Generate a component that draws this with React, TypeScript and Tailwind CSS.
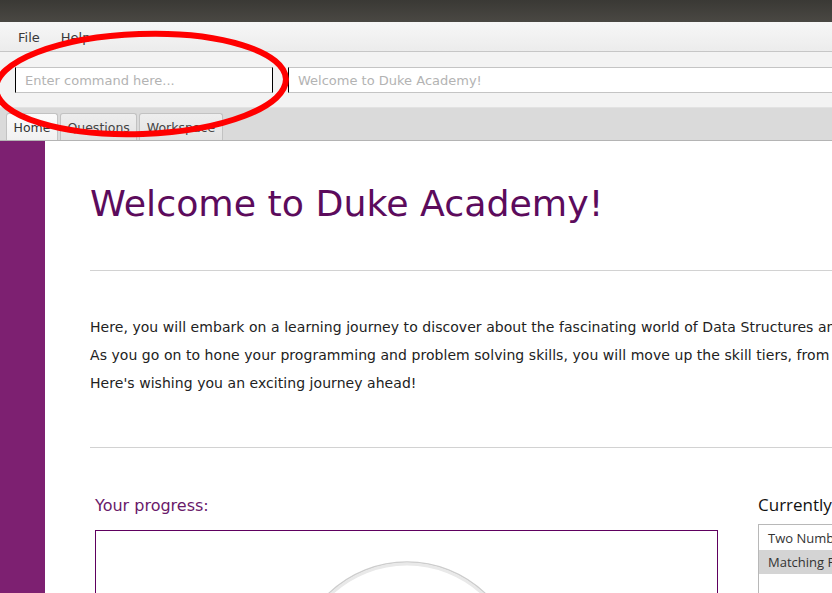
import React from "react";

export default function App() {
  const tabs = [
    { label: "Home", active: true },
    { label: "Questions", active: false },
    { label: "Workspace", active: false },
  ];
  return (
    <div className="relative w-[832px] h-[593px] overflow-hidden bg-white flex flex-col" style={{ fontFamily: '"DejaVu Sans", sans-serif' }}>
      {/* Window title bar */}
      <div className="h-[22px] shrink-0 bg-gradient-to-b from-[#3a3935] to-[#4a4843]" />

      {/* Menu bar */}
      <div className="h-[30px] shrink-0 flex items-center gap-[21px] pl-[18px] pt-[3px] text-[13px] text-[#3a3a3a] bg-gradient-to-b from-[#f7f7f7] to-[#ececec] border-b border-[#c6c6c6]">
        <span>File</span>
        <span>Help</span>
      </div>

      {/* Command bar */}
      <div className="h-[56px] shrink-0 flex items-center gap-[15px] pl-[15px] bg-[#f3f3f3] border-b border-[#e2e2e2]">
        <div className="w-[258px] h-[26px] bg-white border-y border-[#c4c4c4] border-x border-x-black flex items-center pl-[9px] pt-[2px] text-[13px] text-[#b3b3b3]">
          Enter command here...
        </div>
        <div className="flex-1 h-[26px] bg-white border-y border-[#c4c4c4] border-l border-l-black flex items-center pl-[9px] pt-[2px] text-[13px] text-[#b3b3b3]">
          Welcome to Duke Academy!
        </div>
      </div>

      {/* Tab bar */}
      <div className="h-[33px] shrink-0 bg-[#dadada] border-b border-[#b4b4b4] flex items-end gap-[2px] pl-[6px]">
        {tabs.map((t) => (
          <div
            key={t.label}
            className={
              t.active
                ? "h-[27px] px-[6.5px] pt-[2px] flex items-center text-[12.5px] text-[#333] rounded-t-[3px] border border-b-0 border-[#c2c2c2] bg-gradient-to-b from-[#fbfbfb] to-[#f1f1f1]"
                : "h-[27px] px-[6.5px] pt-[2px] flex items-center text-[12.5px] text-[#444] rounded-t-[3px] border border-b-0 border-[#c2c2c2] bg-gradient-to-b from-[#eeeeee] to-[#e2e2e2]"
            }
          >
            {t.label}
          </div>
        ))}
      </div>

      {/* Content */}
      <div className="flex-1 flex min-h-0">
        <div className="w-[45px] shrink-0 bg-[#7d2071]" />
        <div className="flex-1 min-w-0 overflow-hidden pl-[45px]">
          <h1 className="mt-[45px] text-[36.3px] leading-[36px] text-[#5c0b5c] whitespace-nowrap">
            Welcome to Duke Academy!
          </h1>
          <div className="mt-[48px] h-px bg-[#d2d2d2] w-[800px]" />
          <div className="mt-[42px] text-[14px] leading-[28px] tracking-[0.05px] text-[#222] whitespace-nowrap">
            <p>Here, you will embark on a learning journey to discover about the fascinating world of Data Structures and Algorithms.</p>
            <p>As you go on to hone your programming and problem solving skills, you will move up the skill tiers, from Novice to Master.</p>
            <p>Here's wishing you an exciting journey ahead!</p>
          </div>
          <div className="mt-[50px] h-px bg-[#d2d2d2] w-[800px]" />

          <div className="flex gap-[40px] pl-[5px] mt-[48px]">
            <div className="w-[623px] shrink-0">
              <div className="text-[16px] leading-[20px] text-[#6a1a6a]">Your progress:</div>
              <div className="mt-[14px] h-[200px] border border-[#5f005f] flex justify-center pt-[28px]">
                <svg width="232" height="232" viewBox="0 0 232 232">
                  <circle cx="116" cy="116" r="113" fill="none" stroke="#cdcdcd" strokeWidth="1.5" />
                  <circle cx="116" cy="116" r="111" fill="none" stroke="#e9e9e9" strokeWidth="3" />
                </svg>
              </div>
            </div>
            <div className="shrink-0 w-[200px]" style={{ fontFamily: '"Open Sans", sans-serif' }}>
              <div className="text-[17px] leading-[17px] text-[#111]">Currently attempting:</div>
              <div className="mt-[11px] h-[200px] border border-[#b8b8b8] bg-white text-[13px] text-[#333] pt-px">
                <div className="h-[24px] flex items-center pl-[9px] pt-[1px] whitespace-nowrap">Two Number Sum</div>
                <div className="h-[24px] flex items-center pl-[9px] pt-[1px] bg-[#d4d4d4] whitespace-nowrap">Matching Parentheses</div>
              </div>
            </div>
          </div>
        </div>
      </div>

      {/* Red annotation ellipse */}
      <svg className="absolute left-0 top-0 pointer-events-none" width="832" height="593" viewBox="0 0 832 593">
        <ellipse cx="141" cy="84" rx="145" ry="50" fill="none" stroke="#ff0000" strokeWidth="6" transform="rotate(-2 141 84)" />
      </svg>
    </div>
  );
}
